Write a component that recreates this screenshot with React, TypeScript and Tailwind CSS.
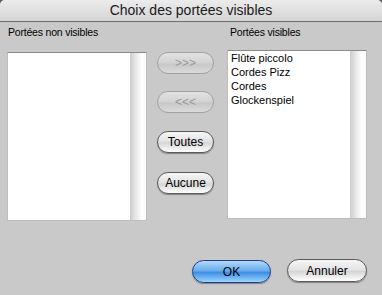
import React from "react";

const font = { fontFamily: '"Liberation Sans", Arial, sans-serif' };

function AquaButton({ label, disabled = false }: { label: string; disabled?: boolean }) {
  return (
    <button
      className={`h-[22px] w-[57px] rounded-full border text-[12px] leading-none flex items-center justify-center ${
        disabled
          ? "border-[#a2a2a2] text-[#9a9a9a] bg-[linear-gradient(to_bottom,#e2e2e2,#d2d2d2_50%,#c8c8c8_55%,#dadada)]"
          : "border-[#5a5a5a] text-black bg-[linear-gradient(to_bottom,#f6f6f6,#e4e4e4_45%,#d6d6d6_55%,#ffffff)] shadow-[0_1px_1px_rgba(0,0,0,0.35)]"
      }`}
    >
      {label}
    </button>
  );
}

function ListBox({ items, top }: { items: string[]; top: string }) {
  return (
    <div className={`${top} h-[169px] w-[140px] flex bg-white border border-[#bdbdbd] border-t-[#8a8a8a]`}>
      <ul className="flex-1 pl-[3px] text-[11px] leading-[14px] text-black">
        {items.map((it) => (
          <li key={it}>{it}</li>
        ))}
      </ul>
      <div className="w-[16px] h-full bg-[linear-gradient(to_right,#cdcdcd,#ededed_45%,#ffffff_75%,#fafafa)]" />
    </div>
  );
}

export default function App() {
  return (
    <div className="w-[382px] h-[295px] bg-[#5a5a5a]" style={font}>
      <div className="w-full h-full rounded-t-[5px] overflow-hidden bg-[#c9c9c9] flex flex-col">
        {/* Title bar */}
        <div className="h-[22px] border-b border-[#6e6e6e] bg-[linear-gradient(to_bottom,#ececec,#d4d4d4)] flex items-center justify-center">
          <span className="text-[14px] text-[#1a1a1a]">Choix des portées visibles</span>
        </div>

        {/* Lists + transfer buttons */}
        <div className="flex items-start pl-[7px]">
          <div className="w-[140px] pt-[4px]">
            <div className="text-[10.5px] leading-[13px] tracking-[-0.2px] text-black pl-[1px]">Portées non visibles</div>
            <ListBox items={[]} top="mt-[13px]" />
          </div>

          <div className="ml-[10px] w-[57px] pt-[30px] flex flex-col">
            <AquaButton label=">>>" disabled />
            <div className="mt-[17px]">
              <AquaButton label="<<<" disabled />
            </div>
            <div className="mt-[18px]">
              <AquaButton label="Toutes" />
            </div>
            <div className="mt-[19px]">
              <AquaButton label="Aucune" />
            </div>
          </div>

          <div className="ml-[13px] w-[140px] pt-[4px]">
            <div className="text-[10.5px] leading-[13px] tracking-[-0.2px] text-black pl-[3px]">Portées visibles</div>
            <ListBox items={["Flûte piccolo", "Cordes Pizz", "Cordes", "Glockenspiel"]} top="mt-[11px]" />
          </div>
        </div>

        {/* Footer */}
        <div className="mt-[38px] flex items-start justify-end pr-[15px] gap-[16px]">
          <button className="mt-[1px] h-[23px] w-[79px] rounded-full border border-[#1e3f86] text-[12px] text-black bg-[linear-gradient(to_bottom,#b4d8fa,#6aaeee_45%,#3f8fe4_55%,#9ad6ff)] shadow-[0_1px_1px_rgba(0,0,0,0.35)]">
            OK
          </button>
          <button className="h-[23px] w-[80px] rounded-full border border-[#5a5a5a] text-[12px] text-black bg-[linear-gradient(to_bottom,#f6f6f6,#e4e4e4_45%,#d6d6d6_55%,#ffffff)] shadow-[0_1px_1px_rgba(0,0,0,0.35)]">
            Annuler
          </button>
        </div>
      </div>
    </div>
  );
}
